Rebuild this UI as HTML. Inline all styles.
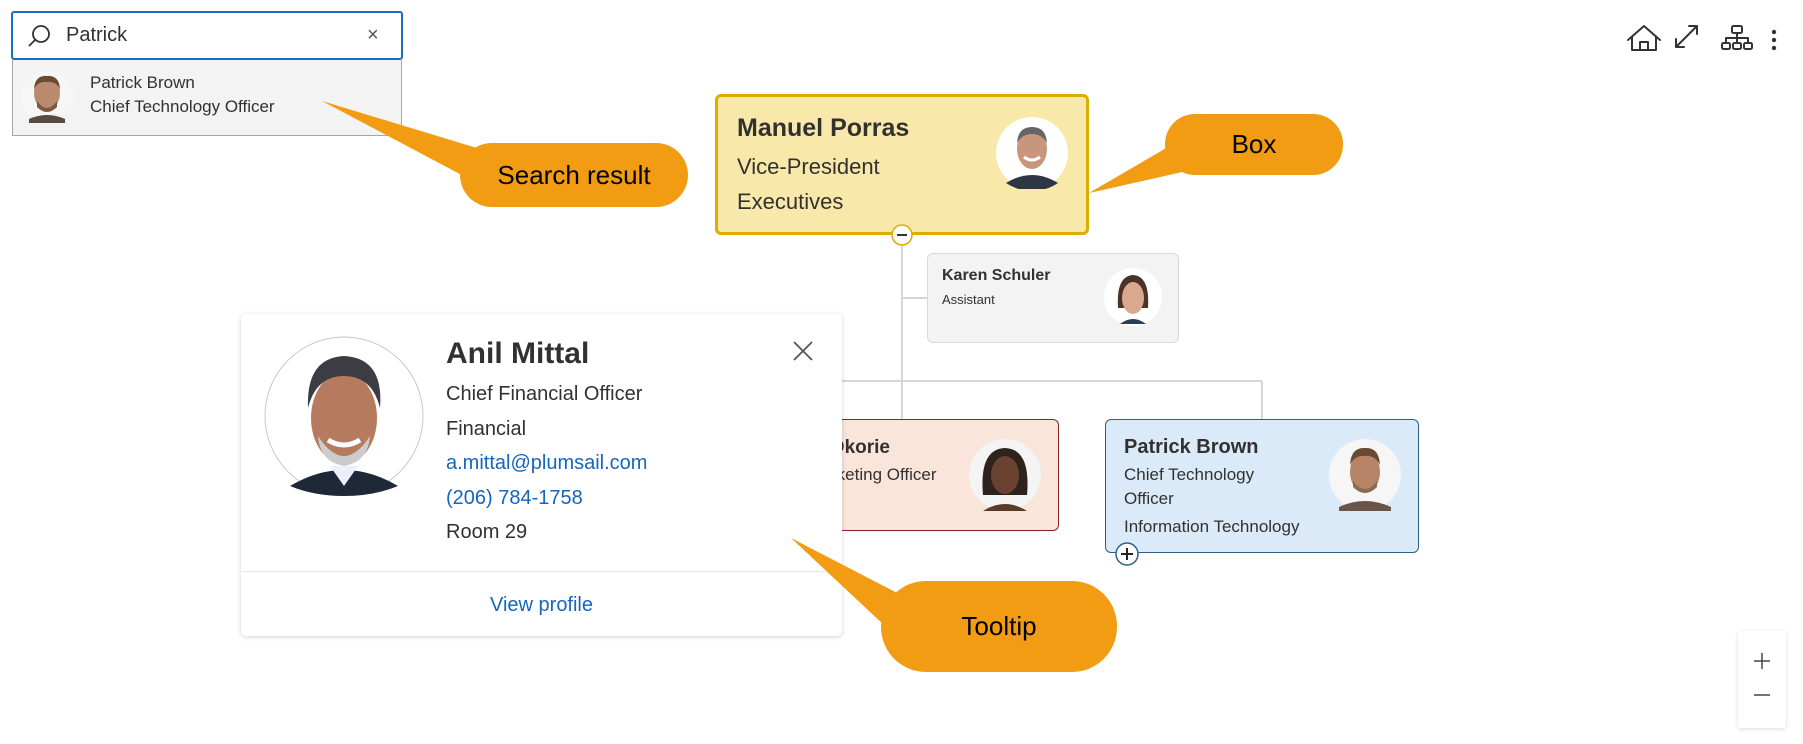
<!DOCTYPE html>
<html><head><meta charset="utf-8"><style>
*{box-sizing:border-box;margin:0;padding:0}
body{width:1803px;height:744px;background:#fff;position:relative;overflow:hidden;font-family:"Liberation Sans",sans-serif;color:#323130}
.abs{position:absolute}
.card{position:absolute;border-radius:6px}
.t{position:absolute;white-space:nowrap}
</style></head><body>
<svg class="abs" style="left:0;top:0" width="1803" height="744">
<g stroke="#d6d6d6" stroke-width="2" fill="none">
<line x1="902" y1="235" x2="902" y2="420"/>
<line x1="902" y1="298" x2="927" y2="298"/>
<line x1="600" y1="381" x2="1262" y2="381"/>
<line x1="1262" y1="381" x2="1262" y2="420"/>
</g></svg>

<div class="abs" style="left:11px;top:11px;width:392px;height:49px;border:2px solid #1f6cbf;border-radius:3px;background:#fff"></div>
<svg class="abs" style="left:26px;top:23px" width="26" height="26" viewBox="0 0 26 26"><circle cx="15" cy="11" r="8" fill="none" stroke="#333" stroke-width="1.8"/><line x1="9.5" y1="16.5" x2="3" y2="23" stroke="#333" stroke-width="1.8"/></svg>
<div class="t" style="left:66px;top:24px;font-size:20px;color:#323130">Patrick</div>
<div class="t" style="left:367px;top:24px;font-size:20px;color:#555">×</div>
<div class="abs" style="left:12px;top:60px;width:390px;height:76px;background:#f3f3f3;border:1px solid #a6a6a6;border-top:none"></div>
<svg class="abs" style="left:21px;top:71px" width="52" height="52"><circle cx="26" cy="26" r="26" fill="#f6f6f6"/><ellipse cx="26" cy="22" rx="13" ry="17" fill="#b98a6d"/><path d="M13 18 Q14 4 26 5 Q38 4 39 18 Q35 10 26 11 Q17 10 13 18Z" fill="#6a4a35"/><path d="M16 30 Q26 44 36 30 L36 36 Q26 46 16 36Z" fill="#7a5a45"/><path d="M8 48 Q26 40 44 48 L44 52 L8 52Z" fill="#5a4a40"/></svg>
<div class="t" style="left:90px;top:73px;font-size:17px">Patrick Brown</div>
<div class="t" style="left:90px;top:97px;font-size:17px">Chief Technology Officer</div>

<div class="card" style="left:715px;top:94px;width:374px;height:141px;background:#f8e9aa;border:3.5px solid #dcae00"></div>
<div class="t" style="left:737px;top:114px;font-size:25px;font-weight:bold;color:#323130">Manuel Porras</div>
<div class="t" style="left:737px;top:154px;font-size:22px">Vice-President</div>
<div class="t" style="left:737px;top:189px;font-size:22px">Executives</div>
<svg class="abs" style="left:996px;top:117px" width="72" height="72"><circle cx="36" cy="36" r="36" fill="#fff"/><path d="M10 66 Q36 50 62 66 Q50 74 36 74 Q22 74 10 66Z" fill="#2c3645"/><ellipse cx="36" cy="32" rx="15" ry="20" fill="#c8967a"/><path d="M21 26 Q22 10 36 10 Q50 10 51 26 Q46 17 36 17 Q26 17 21 26Z" fill="#666"/><path d="M28 40 Q36 46 44 40" stroke="#fff" stroke-width="3" fill="none"/></svg>
<svg class="abs" style="left:891px;top:224px" width="22" height="22"><circle cx="11" cy="11" r="10" fill="#fff" stroke="#dcae00" stroke-width="1.5"/><line x1="6" y1="11" x2="16" y2="11" stroke="#333" stroke-width="2"/></svg>

<div class="card" style="left:927px;top:253px;width:252px;height:90px;background:#f3f3f3;border:1px solid #d9d9d9"></div>
<div class="t" style="left:942px;top:267px;font-size:16px;font-weight:bold">Karen Schuler</div>
<div class="t" style="left:942px;top:292px;font-size:13px">Assistant</div>
<svg class="abs" style="left:1104px;top:268px" width="58" height="58"><circle cx="29" cy="29" r="29" fill="#fff"/><path d="M14 40 Q12 8 29 7 Q46 8 44 40Z" fill="#4a3428"/><ellipse cx="29" cy="30" rx="11" ry="16" fill="#d9a88e"/><path d="M16 56 Q29 46 42 56Z" fill="#2c3e56"/></svg>

<div class="card" style="left:745px;top:419px;width:314px;height:112px;background:#f9e5d9;border:1.5px solid #8a2424"></div>
<div class="t" style="left:758px;top:437px;font-size:19px;font-weight:bold">Adaeze Okorie</div>
<div class="t" style="left:763px;top:465px;font-size:17px">Chief Marketing Officer</div>
<div class="t" style="left:763px;top:493px;font-size:17px">Marketing</div>
<svg class="abs" style="left:969px;top:439px" width="72" height="72"><circle cx="36" cy="36" r="36" fill="#f4f4f4"/><path d="M14 56 Q10 10 36 9 Q62 10 58 56Z" fill="#2e221c"/><ellipse cx="36" cy="36" rx="14" ry="19" fill="#6a4330"/><path d="M14 72 Q36 58 58 72Z" fill="#5a3a2a"/></svg>

<div class="card" style="left:1105px;top:419px;width:314px;height:134px;background:#dbeaf8;border:1.5px solid #2e5f8a"></div>
<div class="t" style="left:1124px;top:436px;font-size:20px;font-weight:bold">Patrick Brown</div>
<div class="t" style="left:1124px;top:465px;font-size:17px">Chief Technology</div>
<div class="t" style="left:1124px;top:489px;font-size:17px">Officer</div>
<div class="t" style="left:1124px;top:517px;font-size:17px">Information Technology</div>
<svg class="abs" style="left:1329px;top:439px" width="72" height="72"><circle cx="36" cy="36" r="36" fill="#f6f6f6"/><path d="M10 68 Q36 56 62 68 L62 72 L10 72Z" fill="#6a5448"/><ellipse cx="36" cy="33" rx="15" ry="21" fill="#b88468"/><path d="M21 26 Q22 8 36 9 Q50 8 51 26 Q46 16 36 17 Q26 16 21 26Z" fill="#6a4a35"/><path d="M24 42 Q36 58 48 42 L48 48 Q36 60 24 48Z" fill="#8a6a55"/></svg>
<svg class="abs" style="left:1115px;top:542px" width="24" height="24"><circle cx="12" cy="12" r="11" fill="#fff" stroke="#2e5f8a" stroke-width="1.5"/><line x1="6" y1="12" x2="18" y2="12" stroke="#222" stroke-width="2"/><line x1="12" y1="6" x2="12" y2="18" stroke="#222" stroke-width="2"/></svg>

<div class="abs" style="left:241px;top:314px;width:601px;height:322px;background:#fff;border-radius:5px;box-shadow:0 1px 5px rgba(0,0,0,.18)"></div>
<div class="abs" style="left:241px;top:571px;width:601px;height:1px;background:#e6e6e6"></div>
<svg class="abs" style="left:264px;top:336px" width="160" height="160"><circle cx="80" cy="80" r="79" fill="#fff" stroke="#c8c8c8" stroke-width="1"/><path d="M26 150 Q80 118 134 150 Q110 160 80 160 Q50 160 26 150Z" fill="#1f2836"/><path d="M66 130 L80 150 L94 130Z" fill="#eef"/><ellipse cx="80" cy="82" rx="33" ry="46" fill="#b67b5e"/><path d="M44 72 Q42 22 80 20 Q120 22 116 72 Q108 40 80 40 Q52 40 44 72Z" fill="#3c3c44"/><path d="M54 100 Q80 140 106 100 Q104 126 80 130 Q56 126 54 100Z" fill="#ccc"/><path d="M64 104 Q80 114 96 104" stroke="#fff" stroke-width="5" fill="none"/></svg>
<div class="t" style="left:446px;top:337px;font-size:30px;font-weight:bold;color:#323130">Anil Mittal</div>
<div class="t" style="left:446px;top:383px;font-size:20px">Chief Financial Officer</div>
<div class="t" style="left:446px;top:418px;font-size:20px">Financial</div>
<div class="t" style="left:446px;top:452px;font-size:20px;color:#1565c0">a.mittal@plumsail.com</div>
<div class="t" style="left:446px;top:487px;font-size:20px;color:#1565c0">(206) 784-1758</div>
<div class="t" style="left:446px;top:521px;font-size:20px">Room 29</div>
<svg class="abs" style="left:792px;top:340px" width="22" height="22"><path d="M2 2 L20 20 M20 2 L2 20" stroke="#555" stroke-width="1.8"/></svg>
<div class="t" style="left:241px;width:601px;text-align:center;top:594px;font-size:20px;color:#1565c0">View profile</div>

<svg class="abs" style="left:1625px;top:14px" width="170" height="40" viewBox="0 0 170 40">
<g fill="none" stroke="#333" stroke-width="2" stroke-linejoin="round" stroke-linecap="round">
<path d="M3 26 L19 12 L35 26 M7 23 V36 H31 V23 M15 36 V28 H23 V36"/>
<path d="M51 33 L72 12 M51 33 V25 M51 33 H59 M72 12 H64 M72 12 V20"/>
<rect x="107" y="12" width="10" height="7" rx="1.5"/><path d="M112 19 V24 M101 24 H123 M101 24 V28 M112 24 V28 M123 24 V28"/>
<rect x="97" y="29" width="8" height="6" rx="1.5"/><rect x="108" y="29" width="8" height="6" rx="1.5"/><rect x="119" y="29" width="8" height="6" rx="1.5"/>
</g>
<g fill="#333"><circle cx="149" cy="18" r="2.2"/><circle cx="149" cy="26" r="2.2"/><circle cx="149" cy="34" r="2.2"/></g>
</svg>

<div class="abs" style="left:1738px;top:631px;width:48px;height:97px;background:#fff;border-radius:3px;box-shadow:0 1px 4px rgba(0,0,0,.15)"></div>
<svg class="abs" style="left:1738px;top:631px" width="48" height="97"><g stroke="#444" stroke-width="1.5"><line x1="16" y1="30" x2="32" y2="30"/><line x1="24" y1="22" x2="24" y2="38"/><line x1="16" y1="64" x2="32" y2="64"/></g></svg>

<svg class="abs" style="left:0;top:0" width="1803" height="744">
<g fill="#f29c13">
<path d="M322 101 L510 158 L490 190Z"/>
<rect x="460" y="143" width="228" height="64" rx="32"/>
<path d="M1089 193 L1180 140 L1200 168Z"/>
<rect x="1165" y="114" width="178" height="61" rx="30"/>
<path d="M791 538 L930 610 L900 640Z"/>
<rect x="881" y="581" width="236" height="91" rx="45"/>
</g>
<g font-family="Liberation Sans, sans-serif" font-size="26" fill="#000" text-anchor="middle">
<text x="574" y="184">Search result</text>
<text x="1254" y="153">Box</text>
<text x="999" y="635">Tooltip</text>
</g>
</svg>
</body></html>
